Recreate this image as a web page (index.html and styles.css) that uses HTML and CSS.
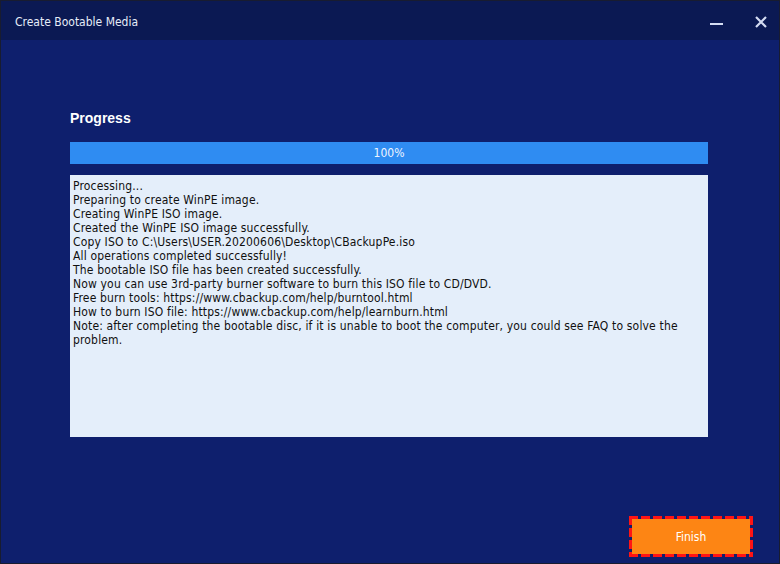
FILE: index.html
```html
<!DOCTYPE html>
<html>
<head>
<meta charset="utf-8">
<link rel="stylesheet" href="styles.css">
</head>
<body>
<div class="window">
  <div class="titlebar">
    <div class="title">Create Bootable Media</div>
    <div class="controls">
      <svg class="ctl min" width="13" height="12" viewBox="0 0 13 12"><rect x="0" y="7" width="13" height="2" fill="#d4dcf2"/></svg>
      <svg class="ctl close" width="12" height="12" viewBox="0 0 12 12"><path d="M1 1 L11 11 M11 1 L1 11" stroke="#d4dcf2" stroke-width="2.2"/></svg>
    </div>
  </div>
  <div class="content">
    <div class="heading">Progress</div>
    <div class="bar">100%</div>
    <div class="log">
      <div>Processing...</div>
      <div>Preparing to create WinPE image.</div>
      <div>Creating WinPE ISO image.</div>
      <div>Created the WinPE ISO image successfully.</div>
      <div>Copy ISO to C:\Users\USER.20200606\Desktop\CBackupPe.iso</div>
      <div>All operations completed successfully!</div>
      <div>The bootable ISO file has been created successfully.</div>
      <div>Now you can use 3rd-party burner software to burn this ISO file to CD/DVD.</div>
      <div>Free burn tools: https://www.cbackup.com/help/burntool.html</div>
      <div>How to burn ISO file: https://www.cbackup.com/help/learnburn.html</div>
      <div>Note: after completing the bootable disc, if it is unable to boot the computer, you could see FAQ to solve the</div>
      <div>problem.</div>
    </div>
  </div>
  <div class="footer">
    <div class="finish-wrap"><div class="finish">Finish</div></div>
  </div>
</div>
</body>
</html>
```

FILE: styles.css
```css
html, body {
  margin: 0;
  padding: 0;
  background: #0e1f6d;
}
.window {
  width: 780px;
  height: 564px;
  box-sizing: border-box;
  border: 1px solid #181c30;
  background: #0e1f6d;
  display: flex;
  flex-direction: column;
  font-family: "DejaVu Sans Condensed", "Liberation Sans", Arial, sans-serif;
}
.titlebar {
  height: 39px;
  background: #0b1953;
  display: flex;
  align-items: center;
  justify-content: space-between;
  flex-shrink: 0;
}
.title {
  color: #e6ecf8;
  font-size: 12px;
  padding-left: 14px;
  margin-top: 2px;
}
.controls {
  display: flex;
  align-items: center;
  gap: 32px;
  padding-right: 12px;
  margin-top: 2px;
}
.ctl { display: block; }
.content {
  flex: 1;
  padding: 0 71px 0 69px;
  display: flex;
  flex-direction: column;
}
.heading {
  margin-top: 70px;
  line-height: 16px;
  height: 16px;
  color: #ffffff;
  font-family: "Liberation Sans", Arial, sans-serif;
  font-weight: bold;
  font-size: 14px;
}
.bar {
  margin-top: 16px;
  height: 22px;
  line-height: 22px;
  background: #2f8cf2;
  color: #eef4ff;
  font-size: 12px;
  text-align: center;
}
.log {
  margin-top: 11px;
  height: 262px;
  box-sizing: border-box;
  background: #e4eefa;
  padding: 4px 3px;
  color: #101010;
  font-size: 12px;
  line-height: 14px;
  letter-spacing: 0.16px;
}
.footer {
  display: flex;
  justify-content: flex-end;
  padding: 0 26px 6px 0;
}
.finish-wrap {
  width: 124px;
  height: 41px;
  box-sizing: border-box;
  padding: 3px;
  background:
    repeating-linear-gradient(90deg, #ff1414 0 9px, transparent 9px 12px) top left / 100% 3px no-repeat,
    repeating-linear-gradient(90deg, #ff1414 0 9px, transparent 9px 12px) bottom left / 100% 3px no-repeat,
    repeating-linear-gradient(180deg, #ff1414 0 9px, transparent 9px 12px) top left / 3px 100% no-repeat,
    repeating-linear-gradient(180deg, #ff1414 0 9px, transparent 9px 12px) top right / 3px 100% no-repeat;
}
.finish {
  height: 100%;
  background: #fd8514;
  color: #ffffff;
  font-size: 12px;
  display: flex;
  align-items: center;
  justify-content: center;
}
```
